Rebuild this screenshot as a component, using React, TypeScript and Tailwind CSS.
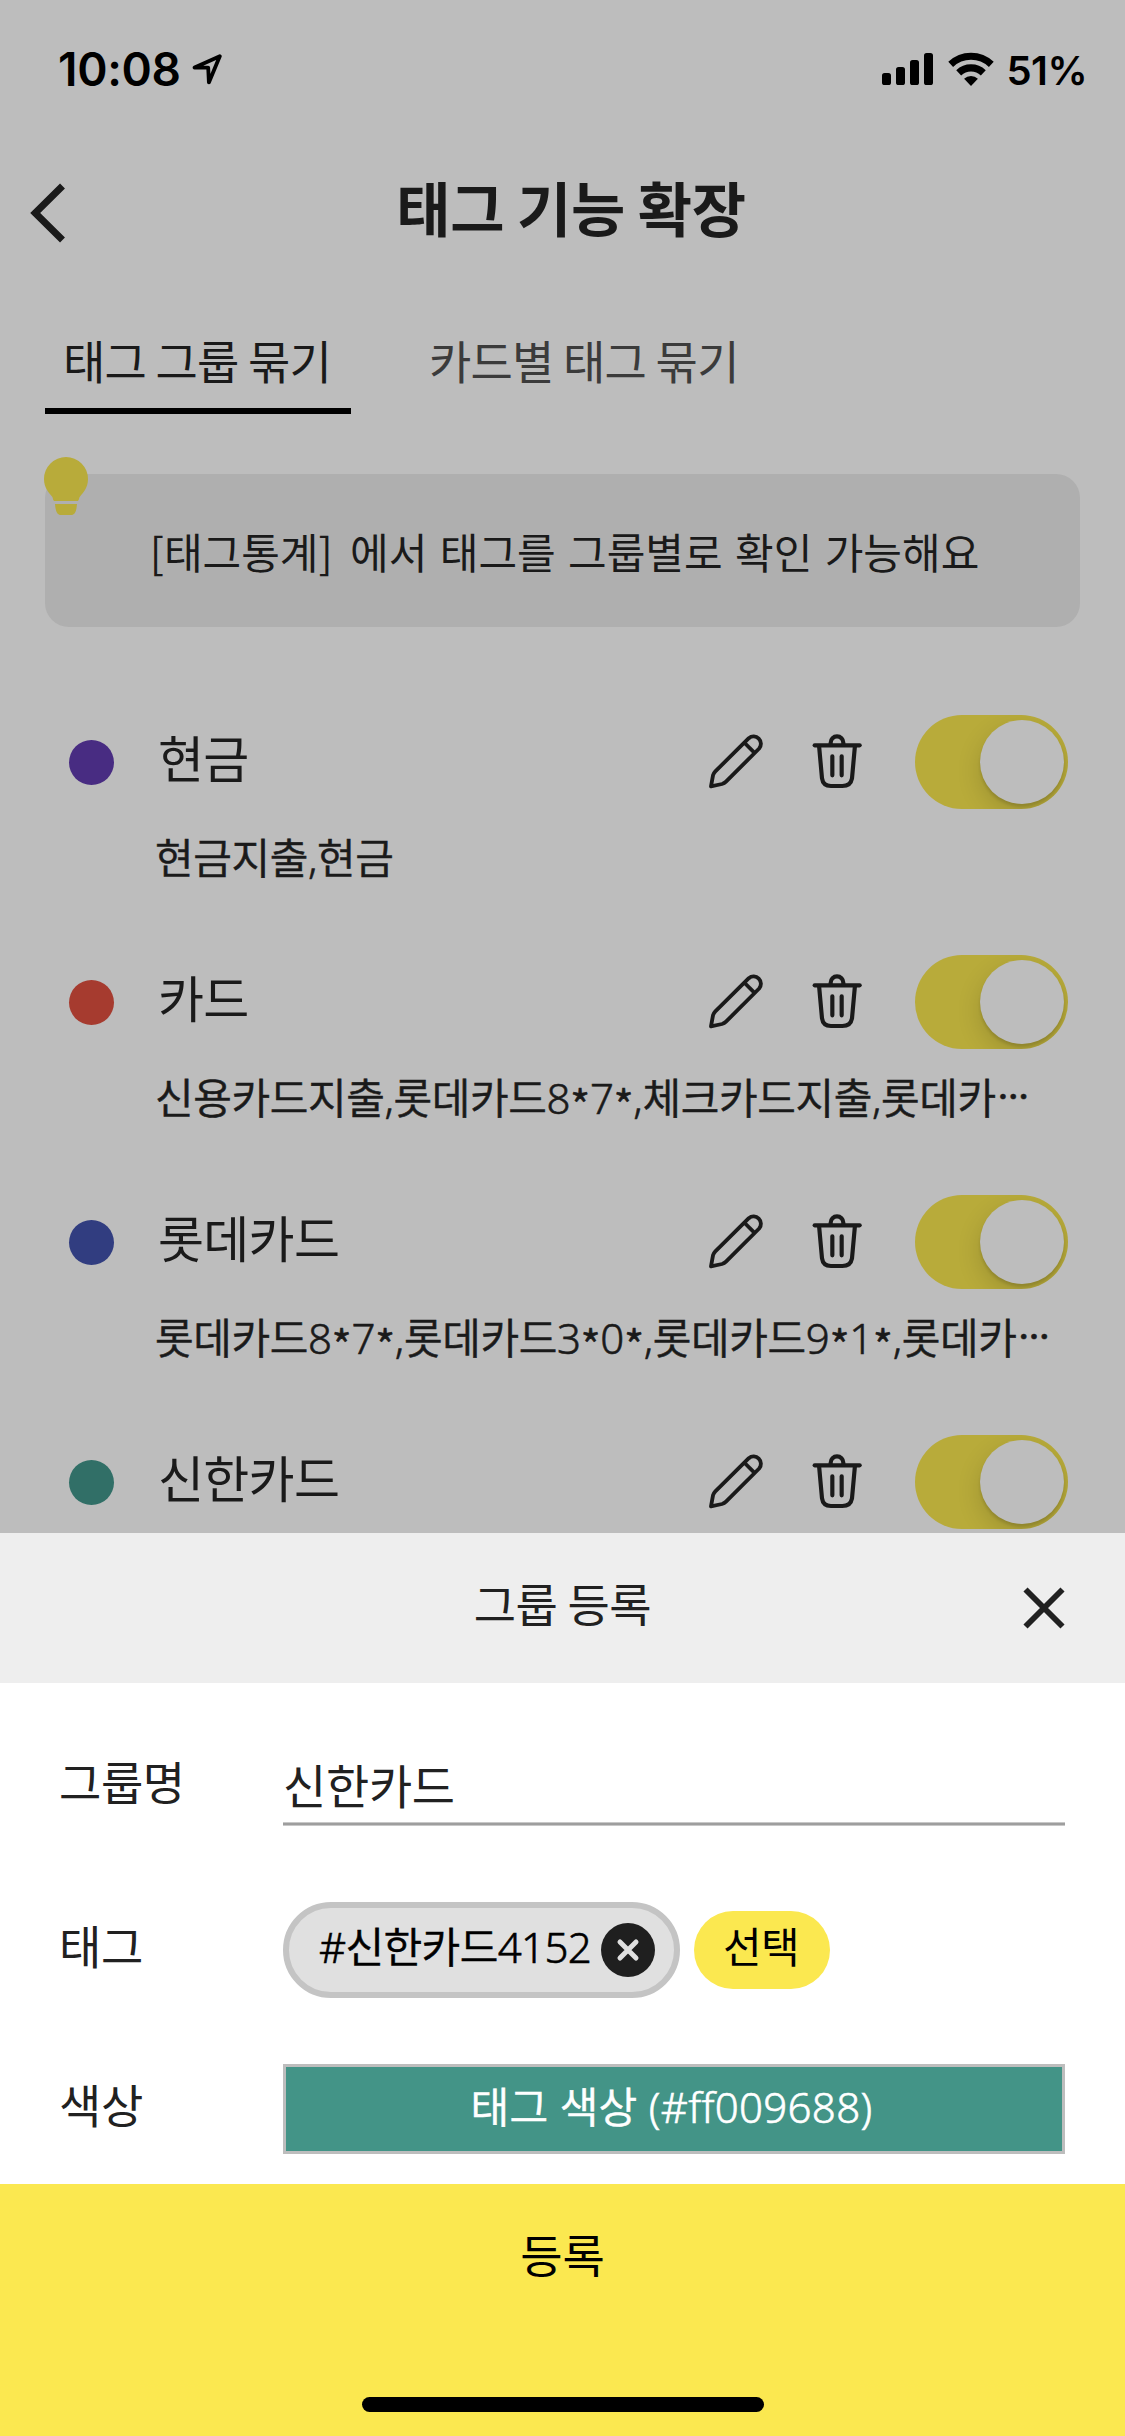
import { useState } from "react";

type Group = {
  name: string;
  color: string;
  tags?: string;
  truncated?: boolean;
};

const groups: Group[] = [
  { name: "현금", color: "bg-[#482c82]", tags: "현금지출,현금" },
  {
    name: "카드",
    color: "bg-[#a63b2f]",
    tags: "신용카드지출,롯데카드8*7*,체크카드지출,롯데카",
    truncated: true,
  },
  {
    name: "롯데카드",
    color: "bg-[#313d80]",
    tags: "롯데카드8*7*,롯데카드3*0*,롯데카드9*1*,롯데카",
    truncated: true,
  },
  { name: "신한카드", color: "bg-[#316f67]" },
];

// Location arrow in the status bar
function LocationIcon() {
  return (
    <svg width="30" height="32" viewBox="0 0 30 32" fill="none">
      <path
        d="M27.8 3.2L2.6 14.6H16.2L16.9 29.4Z"
        stroke="#000"
        strokeWidth="3.8"
        strokeLinejoin="round"
      />
    </svg>
  );
}

function SignalIcon() {
  return (
    <svg width="51" height="32" viewBox="0 0 51 32" fill="#000">
      <rect x="0" y="20" width="9" height="12" rx="2.6" />
      <rect x="14" y="14" width="9" height="18" rx="2.6" />
      <rect x="28" y="7" width="9" height="25" rx="2.6" />
      <rect x="42" y="0" width="9" height="32" rx="2.6" />
    </svg>
  );
}

function WifiIcon() {
  return (
    <svg width="46" height="34" viewBox="-23 -34 46 34" fill="none">
      <path d="M-20.3 -21.6A29.5 29.5 0 0 1 20.3 -21.6" stroke="#000" strokeWidth="7" />
      <path d="M-12.3 -13.2A18 18 0 0 1 12.3 -13.2" stroke="#000" strokeWidth="7.2" />
      <path d="M0 0L-6.9 -7.2A10 10 0 0 1 6.9 -7.2Z" fill="#000" />
    </svg>
  );
}

function BackIcon() {
  return (
    <svg width="36" height="60" viewBox="0 0 36 60" fill="none">
      <path d="M32.5 3L5.2 30L32.5 57" stroke="#1a1a1a" strokeWidth="7" />
    </svg>
  );
}

function BulbIcon() {
  return (
    <svg width="44" height="58" viewBox="0 0 44 58" fill="#b8ab3a">
      <path d="M22 0A22 22 0 0 1 44 22C44 31 39 36 36 39.500C34.500 41.500 35.500 44 33 44H11C8.500 44 9.500 41.500 8 39.500C5 36 0 31 0 22A22 22 0 0 1 22 0Z" />
      <path d="M11 47H33C32.500 54 31 58 27 58H17C13 58 11.500 54 11 47Z" />
    </svg>
  );
}

function PencilIcon() {
  return (
    <svg
      width="56"
      height="56"
      viewBox="204 158 168 168"
      fill="none"
      stroke="#1a1a1a"
      strokeWidth="11.5"
      strokeLinejoin="round"
    >
      <path d="M213 318L219 285Q221 278 226 273L326.500 173.500A22 22 0 0 1 357.500 204.500L258 304Q253 309 246 311Z" />
      <path d="M314 188L343 217" />
    </svg>
  );
}

function TrashIcon() {
  return (
    <svg
      width="50"
      height="56"
      viewBox="516 161 150 168"
      fill="none"
      stroke="#1a1a1a"
      strokeWidth="12.5"
      strokeLinecap="round"
    >
      <path d="M524 198H659" />
      <path d="M572 196V190A19 19 0 0 1 610 190V196" />
      <path d="M537.500 203L546 297Q549 320 573 320H607Q632 320 636 297L644.500 203" />
      <path d="M577 231V288M605 231V288" />
    </svg>
  );
}

function CloseIcon() {
  return (
    <svg width="42" height="42" viewBox="0 0 42 42" fill="none">
      <path d="M2.500 2.500L39.500 39.500M39.500 2.500L2.500 39.500" stroke="#212121" strokeWidth="5.8" />
    </svg>
  );
}

// Toggle component
function Toggle() {
  const [enabled, setEnabled] = useState(true);

  return (
    <button
      onClick={() => setEnabled(!enabled)}
      className={`w-[153px] h-[94px] px-1 rounded-full overflow-hidden flex items-center shrink-0 ${
        enabled ? "bg-[#b8ab3a] justify-end" : "bg-[#a8a8a8] justify-start"
      }`}
    >
      <div className="w-[84px] h-[84px] rounded-full bg-[#bdbdbd] shadow-[0_9px_24px_rgba(0,0,0,0.15),0_3px_3px_rgba(0,0,0,0.12)]" />
    </button>
  );
}

// Comma separated tags, with the masking asterisks centred on the digits
function TagList({ tags, truncated }: { tags: string; truncated?: boolean }) {
  return (
    <div className="mt-[19px] pl-[155px] text-[42px] leading-[60px] tracking-[-0.4px] font-[350] [-webkit-text-stroke:0.6px] whitespace-nowrap font-['Noto_Sans','Noto_Sans_CJK_KR',sans-serif]">
      {tags.split("*").map((part, i) => (
        <span key={i}>
          {i > 0 && (
            <span className="relative top-[9px] text-[44px] leading-none font-['Noto_Sans_CJK_KR',sans-serif]">
              *
            </span>
          )}
          {part}
        </span>
      ))}
      {truncated && (
        <span className="relative top-[-6px] ml-0.5 text-[31px] leading-none font-bold font-['Noto_Sans_CJK_KR',sans-serif]">
          ⋯
        </span>
      )}
    </div>
  );
}

function GroupItem({ group }: { group: Group }) {
  return (
    <div className="h-[240px] shrink-0">
      <div className="flex items-center h-[94px] pl-[69px] pr-[57px]">
        <div className={`w-[45px] h-[45px] rounded-full ${group.color}`} />
        <span className="flex-1 pl-11 pb-3 text-[50px] leading-[70px] tracking-[-0.7px]">
          {group.name}
        </span>
        <div className="pb-0.5">
          <PencilIcon />
        </div>
        <div className="ml-12 mr-[53px] pb-0.5">
          <TrashIcon />
        </div>
        <Toggle />
      </div>
      {group.tags && <TagList tags={group.tags} truncated={group.truncated} />}
    </div>
  );
}

function FieldLabel({ children }: { children: string }) {
  return (
    <span className="w-[224px] pb-3 text-[46px] leading-[60px] tracking-[-0.4px] text-[#212121]">
      {children}
    </span>
  );
}

export default function App() {
  return (
    <div className="w-[1125px] h-[2436px] flex flex-col overflow-hidden bg-white font-['Noto_Sans_CJK_KR',sans-serif]">
      {/* Dimmed page */}
      <div className="h-[1533px] flex flex-col shrink-0 overflow-hidden bg-[#bdbdbd] text-[#1a1a1a]">
        {/* Status bar */}
        <div className="flex items-center justify-between h-[138px] pl-[58px] pr-[38px] shrink-0 text-black font-[Inter,sans-serif] font-semibold">
          <div className="flex items-center gap-[11px]">
            <span className="text-[46px] leading-[60px] tracking-[-0.3px]">10:08</span>
            <LocationIcon />
          </div>
          <div className="flex items-center">
            <SignalIcon />
            <div className="ml-[15px] mr-[13px]">
              <WifiIcon />
            </div>
            <span className="pt-[3px] text-[40px] leading-[60px] tracking-[-0.6px]">51%</span>
          </div>
        </div>

        {/* Header */}
        <div className="flex items-center h-[150px] pl-[30px] pr-[49px] shrink-0">
          <BackIcon />
          <h1 className="flex-1 pb-[13px] text-center text-[59px] leading-[80px] tracking-[-0.4px] font-bold">
            태그 기능 확장
          </h1>
        </div>

        {/* Tabs */}
        <div className="flex h-[126px] pl-[45px] shrink-0 text-[46px] leading-[60px] tracking-[-0.8px]">
          <div className="w-[306px] pt-[41px] pl-[18px] border-b-[6px] border-black">
            태그 그룹 묶기
          </div>
          <div className="pt-[41px] ml-[78px] text-[#3b3b3b]">카드별 태그 묶기</div>
        </div>

        {/* Notice */}
        <div className="relative flex items-center justify-center h-[153px] mt-[60px] mx-[45px] pl-1 shrink-0 rounded-[24px] bg-[#afafaf]">
          <div className="absolute left-[-1px] top-[-17px]">
            <BulbIcon />
          </div>
          <span className="text-[42px] leading-[60px] [word-spacing:3px]">
            <span className="mr-[5px]">[태그통계]</span> 에서 태그를 그룹별로 확인 가능해요
          </span>
        </div>

        {/* Group list */}
        <div className="flex flex-col mt-[88px]">
          {groups.map((group) => (
            <GroupItem key={group.name} group={group} />
          ))}
        </div>
      </div>

      {/* Sheet header */}
      <div className="grid grid-cols-[1fr_auto_1fr] items-center h-[150px] shrink-0 bg-[#eeeeee] text-[#212121]">
        <div />
        <span className="pb-3 text-[46px] leading-[60px] tracking-[-0.4px]">그룹 등록</span>
        <button className="justify-self-end mr-[60px]">
          <CloseIcon />
        </button>
      </div>

      {/* Sheet form */}
      <div className="flex flex-col h-[501px] pt-[63px] pl-[59px] pr-[60px] shrink-0">
        <div className="flex items-center h-20">
          <FieldLabel>그룹명</FieldLabel>
          <div className="flex-1">
            <div className="h-[76px] text-[47px] leading-[76px] tracking-[-0.3px] text-[#212121]">
              신한카드
            </div>
            <div className="h-1 border-y border-[#c8c8c8] bg-[#9e9e9e]" />
          </div>
        </div>

        <div className="flex items-center h-24 mt-[76px]">
          <FieldLabel>태그</FieldLabel>
          <div className="flex items-center justify-between w-[397px] h-24 pl-[30px] pr-[19px] rounded-full border-[6px] border-[#c4c4c4] bg-[#e0e0e0]">
            <span className="pb-1.5 text-[42px] leading-[60px] tracking-[-0.6px] font-[350] [-webkit-text-stroke:0.6px] text-black font-['Noto_Sans','Noto_Sans_CJK_KR',sans-serif]">
              #신한카드4152
            </span>
            <svg width="54" height="54" viewBox="0 0 54 54">
              <circle cx="27" cy="27" r="27" fill="#1f1f1f" />
              <path
                d="M19 19L35 35M35 19L19 35"
                stroke="#e0e0e0"
                strokeWidth="5"
                strokeLinecap="round"
              />
            </svg>
          </div>
          <button className="w-[136px] h-[78px] ml-3.5 pb-2.5 pr-0.5 rounded-full bg-[#fbe850] text-[42px] leading-[60px] tracking-[-0.6px] text-black">
            선택
          </button>
        </div>

        <div className="flex items-center h-[90px] mt-[66px]">
          <FieldLabel>색상</FieldLabel>
          <div className="flex-1 h-[90px] pr-[5px] border-[3px] border-[#bdbdbd] bg-[#439487] text-center text-[42px] leading-[80px] tracking-[0.3px] font-[350] [-webkit-text-stroke:0.6px] text-white font-['Noto_Sans','Noto_Sans_CJK_KR',sans-serif]">
            태그 색상 (#ff009688)
          </div>
        </div>
      </div>

      {/* Submit */}
      <div className="flex flex-col items-center h-[252px] pt-[39px] pb-6 shrink-0 bg-[#fbe850]">
        <span className="text-[46px] leading-[60px] text-black">등록</span>
        <div className="w-[402px] h-[15px] mt-auto rounded-full bg-black" />
      </div>
    </div>
  );
}
